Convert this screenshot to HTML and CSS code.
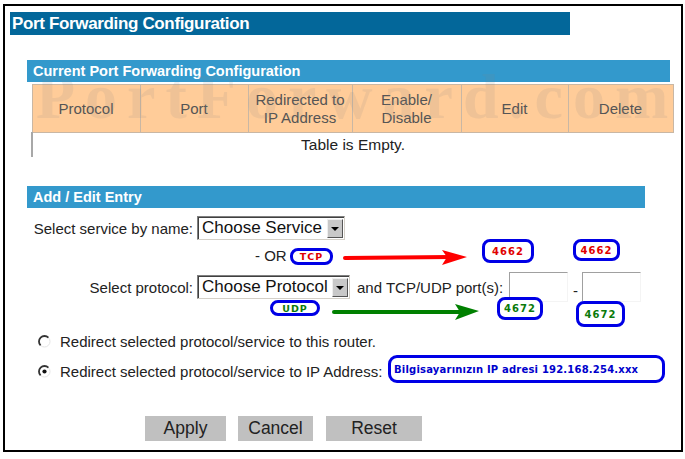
FILE: index.html
```html
<!DOCTYPE html>
<html lang="en">
<head>
    <meta charset="UTF-8">
    <title>Port Forwarding Configuration</title>
    <link rel="stylesheet" href="styles.css">
</head>
<body>
    <div class="frame">
        <div class="page-title">Port Forwarding Configuration</div>

        <!-- Current rules -->
        <div class="section current">
            <div class="section-bar">Current Port Forwarding Configuration</div>
            <table class="rules">
                <thead>
                    <tr>
                        <th class="col-proto">Protocol</th>
                        <th class="col-port">Port</th>
                        <th class="col-ip">Redirected to<br>IP Address</th>
                        <th class="col-enable">Enable/<br>Disable</th>
                        <th class="col-edit">Edit</th>
                        <th class="col-delete">Delete</th>
                    </tr>
                </thead>
                <tbody>
                    <tr>
                        <td colspan="6" class="empty">Table is Empty.</td>
                    </tr>
                </tbody>
            </table>
        </div>

        <!-- Add / edit form -->
        <div class="section entry">
            <div class="section-bar entry-bar">Add / Edit Entry</div>
            <div class="entry-form">
                <div class="field-row service-row">
                    <span class="field-label">Select service by name:</span>
                    <div class="combo combo-service"><span class="combo-text">Choose Service</span><span class="combo-btn"></span></div>
                </div>
                <div class="or-row">- OR -</div>
                <div class="field-row protocol-row">
                    <span class="field-label">Select protocol:</span>
                    <div class="combo combo-protocol"><span class="combo-text">Choose Protocol</span><span class="combo-btn"></span></div>
                    <span class="ports-label">and TCP/UDP port(s):</span>
                    <span class="port-box"></span>
                    <span class="dash">-</span>
                    <span class="port-box"></span>
                </div>
                <div class="radio-row first">
                    <svg class="radio" viewBox="0 0 13 13"><circle cx="6.5" cy="6.5" r="5.5" fill="#fff" stroke="#e4e4e4"/><path d="M10.4 2.6 A5.5 5.5 0 0 0 2.6 10.4" fill="none" stroke="#333" stroke-width="1.8"/></svg>
                    <span>Redirect selected protocol/service to this router.</span>
                </div>
                <div class="radio-row">
                    <svg class="radio" viewBox="0 0 13 13"><circle cx="6.5" cy="6.5" r="5.5" fill="#fff" stroke="#e4e4e4"/><path d="M10.4 2.6 A5.5 5.5 0 0 0 2.6 10.4" fill="none" stroke="#333" stroke-width="1.8"/><circle cx="6.5" cy="6.5" r="2.1" fill="#111"/></svg>
                    <span>Redirect selected protocol/service to IP Address:</span>
                </div>
                <div class="buttons">
                    <button type="button" class="btn btn-apply">Apply</button>
                    <button type="button" class="btn btn-cancel">Cancel</button>
                    <button type="button" class="btn btn-reset">Reset</button>
                </div>
            </div>
        </div>
    </div>

    <div class="watermark">PortForward.com</div>

    <!-- hand-drawn notes on top of the form -->
    <div class="notes">
        <svg class="arrows" viewBox="0 0 685 459">
            <line x1="345" y1="258" x2="450" y2="257" stroke="#f00" stroke-width="4" stroke-linecap="round"/>
            <path d="M442 250 L467 257 L442 265 L447 257 Z" fill="#f00"/>
            <line x1="334" y1="312" x2="462" y2="312" stroke="#008000" stroke-width="4" stroke-linecap="round"/>
            <path d="M455 304 L479 311 L455 320 L460 312 Z" fill="#008000"/>
        </svg>
        <div class="oval oval-tcp red">TCP</div>
        <div class="oval oval-udp green">UDP</div>
        <div class="oval oval-from-tcp red">4662</div>
        <div class="oval oval-to-tcp red">4662</div>
        <div class="oval oval-from-udp green">4672</div>
        <div class="oval oval-to-udp green">4672</div>
        <div class="oval oval-ip">Bilgisayarınızın IP adresi 192.168.254.xxx</div>
    </div>
</body>
</html>
```

FILE: styles.css
```css
body {
    margin: 0;
    position: relative;
    font-family: "Liberation Sans", Arial, sans-serif;
    font-size: 15px;
    color: #222;
    background-color: #fff;
}
.frame {
    margin: 4px 0 0 3px;
    width: 676px;
    height: 444px;
    border: 2px solid #000;
}
.page-title {
    margin: 6px 0 0 5px;
    width: 558px;
    height: 23px;
    line-height: 23px;
    padding-left: 2px;
    background-color: #03679a;
    color: #fff;
    font-weight: bold;
    font-size: 17px;
    letter-spacing: -0.35px;
}
.section.current {
    margin: 25px 0 0 22px;
    width: 643px;
}
.section-bar {
    height: 22px;
    line-height: 22px;
    padding-left: 6px;
    background-color: #3399cc;
    color: #fff;
    font-weight: bold;
    font-size: 14.5px;
}
.rules {
    margin: 2px 0 0 4px;
    width: 635px;
    border-collapse: collapse;
    table-layout: fixed;
}
.rules th {
    height: 47px;
    padding: 0;
    border: 1px solid #c9b7a4;
    background-color: #ffcc99;
    color: #555;
    font-weight: normal;
    font-size: 15px;
    line-height: 18px;
}
.col-proto { width: 107px; }
.col-port { width: 107px; }
.col-ip { width: 103px; }
.col-enable { width: 108px; }
.col-edit { width: 106px; }
.col-delete { width: 104px; }
.rules td.empty {
    height: 24px;
    padding: 0;
    border-left: 2px solid #a8a8a8;
    text-align: center;
    font-size: 15.5px;
}
.section.entry {
    margin: 29px 0 0 22px;
}
.entry-bar {
    width: 612px;
}
.entry-form {
    padding-left: 6px;
}
.field-row {
    display: flex;
    align-items: center;
}
.service-row {
    margin-top: 8px;
    height: 24px;
}
.protocol-row {
    height: 30px;
}
.field-label {
    width: 160px;
    margin-right: 4px;
    text-align: right;
    white-space: nowrap;
}
.combo {
    display: flex;
    align-items: center;
    justify-content: space-between;
    box-sizing: border-box;
    height: 24px;
    padding: 0 1px 0 4px;
    border: 1px solid;
    border-color: #808080 #d4d0c8 #d4d0c8 #808080;
    box-shadow: inset 1px 1px 0 #404040;
    background-color: #fff;
}
.combo-service { width: 148px; }
.combo-protocol { width: 153px; }
.combo-text {
    font-size: 17px;
    color: #111;
}
.combo-btn {
    position: relative;
    box-sizing: border-box;
    width: 16px;
    height: 19px;
    background-color: #c8c8c8;
    border: 1px solid;
    border-color: #eee #555 #555 #eee;
}
.combo-btn::after {
    content: "";
    position: absolute;
    left: 3px;
    top: 7px;
    border-left: 4px solid transparent;
    border-right: 4px solid transparent;
    border-top: 4px solid #000;
}
.or-row {
    height: 32px;
    line-height: 32px;
    padding-left: 222px;
}
.ports-label {
    width: 148px;
    margin-left: 7px;
    white-space: nowrap;
}
.port-box {
    box-sizing: border-box;
    width: 59px;
    height: 30px;
    margin-left: 4px;
    border: 1px solid;
    border-color: #a0a0a0 #f4f4f4 #f4f4f4 #a0a0a0;
}
.dash {
    margin: 6px 4px 0 5px;
}
.dash + .port-box {
    margin-left: 0;
}
.radio-row {
    display: flex;
    align-items: center;
    height: 22px;
    margin-top: 8px;
    padding-left: 5px;
}
.radio-row.first {
    margin-top: 28px;
}
.radio {
    width: 13px;
    height: 13px;
    margin-right: 9px;
}
.buttons {
    display: flex;
    gap: 12px;
    margin-top: 34px;
    padding-left: 112px;
}
.btn {
    height: 25px;
    padding: 0;
    border: none;
    background-color: #c0c0c0;
    color: #222;
    font-family: "Liberation Sans", Arial, sans-serif;
    font-size: 17.5px;
}
.btn-apply { width: 81px; }
.btn-cancel { width: 75px; }
.btn-reset { width: 96px; margin-left: 1px; }

.watermark {
    position: absolute;
    left: 36px;
    top: 60px;
    font-family: "Liberation Serif", "Times New Roman", serif;
    font-size: 64px;
    font-weight: bold;
    letter-spacing: 10px;
    color: rgba(130, 130, 130, 0.13);
    pointer-events: none;
}

/* notes layer */
.notes {
    position: absolute;
    left: 0;
    top: 0;
    width: 685px;
    height: 459px;
    pointer-events: none;
}
.arrows {
    position: absolute;
    left: 0;
    top: 0;
    width: 685px;
    height: 459px;
}
.oval {
    position: absolute;
    box-sizing: border-box;
    display: flex;
    align-items: center;
    justify-content: center;
    border: 3px solid #0000e6;
    border-radius: 8px;
    background-color: #fff;
    font-family: "DejaVu Sans", Verdana, sans-serif;
    font-weight: bold;
    font-size: 10px;
    letter-spacing: 1px;
}
.red { color: #e00000; }
.green { color: #0a7a0a; }
.oval-tcp { left: 290px; top: 248px; width: 43px; height: 17px; font-size: 9.5px; }
.oval-udp { left: 270px; top: 300px; width: 50px; height: 16px; font-size: 9.5px; }
.oval-from-tcp { left: 482px; top: 239px; width: 52px; height: 24px; }
.oval-to-tcp { left: 573px; top: 239px; width: 47px; height: 22px; }
.oval-from-udp { left: 497px; top: 297px; width: 46px; height: 23px; }
.oval-to-udp { left: 576px; top: 301px; width: 49px; height: 26px; }
.oval-ip {
    left: 388px;
    top: 355px;
    width: 277px;
    height: 28px;
    justify-content: flex-start;
    padding-left: 3px;
    color: #0000cc;
    font-size: 10px;
    letter-spacing: 0.2px;
    border-radius: 9px;
}
```
